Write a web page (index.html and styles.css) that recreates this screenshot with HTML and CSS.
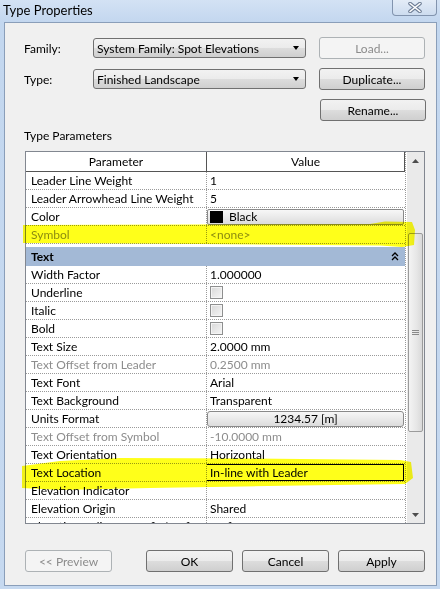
FILE: index.html
```html
<!DOCTYPE html>
<html>
<head>
<meta charset="utf-8">
<link rel="stylesheet" href="styles.css">
</head>
<body>
<div class="window">
  <div class="titlebar">
    <span class="title">Type Properties</span>
    <div class="close">
      <svg width="14" height="11" viewBox="0 0 14 11"><path d="M2 1.5 L12 9.5 M12 1.5 L2 9.5" stroke="#6e7e96" stroke-width="3.6" stroke-linecap="round"/><path d="M2 1.5 L12 9.5 M12 1.5 L2 9.5" stroke="#ffffff" stroke-width="1.6" stroke-linecap="round"/></svg>
    </div>
  </div>
  <div class="panel">
    <div class="form-row">
      <span class="label">Family:</span>
      <div class="combo"><span>System Family: Spot Elevations</span><span class="arrow"></span></div>
      <div class="btn disabled">Load...</div>
    </div>
    <div class="form-row">
      <span class="label">Type:</span>
      <div class="combo"><span>Finished Landscape</span><span class="arrow"></span></div>
      <div class="btn">Duplicate...</div>
    </div>
    <div class="form-row end">
      <div class="btn">Rename...</div>
    </div>
    <div class="section-label">Type Parameters</div>
    <div class="frame">
      <div class="grid">
        <div class="head">
          <div class="hcell">Parameter</div>
          <div class="hcell last">Value</div>
        </div>
        <div class="row"><div class="name">Leader Line Weight</div><div class="val">1</div></div>
        <div class="row"><div class="name">Leader Arrowhead Line Weight</div><div class="val">5</div></div>
        <div class="row"><div class="name">Color</div><div class="val"><div class="cellbtn left"><span class="swatch"></span>Black</div></div></div>
        <div class="row dim"><div class="name">Symbol</div><div class="val">&lt;none&gt;</div></div>
        <div class="group"><div class="group-band"><span>Text</span>
          <svg width="8" height="9" viewBox="0 0 8 9"><path d="M1 4 L4 1 L7 4 M1 8 L4 5 L7 8" stroke="#000" stroke-width="1.3" fill="none"/></svg></div></div>
        <div class="row"><div class="name">Width Factor</div><div class="val">1.000000</div></div>
        <div class="row"><div class="name">Underline</div><div class="val"><span class="check"></span></div></div>
        <div class="row"><div class="name">Italic</div><div class="val"><span class="check"></span></div></div>
        <div class="row"><div class="name">Bold</div><div class="val"><span class="check"></span></div></div>
        <div class="row"><div class="name">Text Size</div><div class="val">2.0000 mm</div></div>
        <div class="row dim"><div class="name">Text Offset from Leader</div><div class="val">0.2500 mm</div></div>
        <div class="row"><div class="name">Text Font</div><div class="val">Arial</div></div>
        <div class="row"><div class="name">Text Background</div><div class="val">Transparent</div></div>
        <div class="row"><div class="name">Units Format</div><div class="val"><div class="cellbtn center">1234.57 [m]</div></div></div>
        <div class="row dim"><div class="name">Text Offset from Symbol</div><div class="val">-10.0000 mm</div></div>
        <div class="row"><div class="name">Text Orientation</div><div class="val">Horizontal</div></div>
        <div class="row"><div class="name">Text Location</div><div class="val"><div class="editbox">In-line with Leader</div></div></div>
        <div class="row"><div class="name">Elevation Indicator</div><div class="val"></div></div>
        <div class="row"><div class="name">Elevation Origin</div><div class="val">Shared</div></div>
        <div class="row"><div class="name">Elevation Indicator Prefix/Suffix</div><div class="val">Suffix</div></div>
      </div>
      <div class="scroll">
        <div class="sbtn"><svg width="7" height="4" viewBox="0 0 7 4"><path d="M0 4 L3.5 0 L7 4 Z" fill="#4d4d4d"/></svg></div>
        <div class="track">
          <div class="thumb"><svg width="7" height="6" viewBox="0 0 7 6"><path d="M0 0.5 H7 M0 2.5 H7 M0 4.5 H7" stroke="#8a8a8a" stroke-width="1"/></svg></div>
        </div>
        <div class="sbtn"><svg width="7" height="4" viewBox="0 0 7 4"><path d="M0 0 L3.5 4 L7 0 Z" fill="#4d4d4d"/></svg></div>
      </div>
    </div>
    <div class="footer">
      <div class="btn disabled preview">&lt;&lt; Preview</div>
      <div class="btn">OK</div>
      <div class="btn">Cancel</div>
      <div class="btn">Apply</div>
    </div>
  </div>
  <svg class="marker" width="440" height="589" viewBox="0 0 440 589">
    <path d="M23 225 L200 224.5 L370 224 L385 221.5 L412 222 L415 230 L414 245 L402 247 L380 245.5 L200 244 L23 243 Z" fill="#ffff1a"/>
    <path d="M22 466 L60 461 L120 458 L250 458.5 L400 460 L411 462 L413 478 L405 484 L300 485.5 L150 488 L60 490 L22 488 Z" fill="#ffff1a"/>
  </svg>
</div>
</body>
</html>
```

FILE: styles.css
```css
* { box-sizing: border-box; }
html, body { margin: 0; padding: 0; }
body {
  width: 440px;
  height: 589px;
  overflow: hidden;
  font-family: Lato, "Noto Sans", sans-serif;
  font-size: 12px;
  color: #000;
}
.window {
  position: relative;
  width: 440px;
  height: 589px;
  display: flex;
  flex-direction: column;
  background: linear-gradient(#d3e2f4, #c3d7ef 22px, #c6d9f0 100%);
}
.titlebar {
  height: 22px;
  display: flex;
  align-items: flex-start;
  padding-left: 3px;
}
.title {
  font-size: 13px;
  line-height: 22px;
  align-self: center;
  margin-top: -3px;
}
.close {
  margin-left: auto;
  margin-right: 3px;
  width: 45px;
  height: 16px;
  border: 1px solid #8294ae;
  border-top: none;
  border-radius: 0 0 4px 4px;
  background: linear-gradient(#e3ecf7, #cddcef);
  display: flex;
  align-items: center;
  justify-content: center;
}
.panel {
  flex: 1;
  margin: 0 3px 3px 4px;
  border: 1px solid #8a9eb9;
  background: #f0f0f0;
  padding: 14px 11px 0 19px;
  display: flex;
  flex-direction: column;
}
.form-row {
  display: flex;
  align-items: center;
  height: 22px;
  margin-bottom: 9px;
}
.form-row.end { justify-content: flex-end; margin-bottom: 0; margin-right: -1px; }
.label { width: 69px; }
.combo {
  width: 213px;
  height: 20px;
  border: 1px solid #707070;
  border-radius: 3px;
  background: linear-gradient(#f2f2f2 0%, #ebebeb 50%, #dddddd 50%, #cfcfcf 100%);
  display: flex;
  align-items: center;
  padding-left: 3px;
  padding-right: 6px;
  margin-right: 13px;
}
.combo .arrow {
  margin-left: auto;
  width: 0;
  height: 0;
  border-left: 3.5px solid transparent;
  border-right: 3.5px solid transparent;
  border-top: 4px solid #000;
}
.btn {
  width: 106px;
  height: 22px;
  border: 1px solid #707070;
  border-radius: 3px;
  background: linear-gradient(#f2f2f2 0%, #ebebeb 50%, #dddddd 50%, #cfcfcf 100%);
  display: flex;
  align-items: center;
  justify-content: center;
}
.btn.disabled {
  border-color: #adb2b5;
  background: #f4f4f4;
  color: #8c8c8c;
}
.section-label {
  margin-top: 7px;
  height: 16px;
  line-height: 16px;
  margin-bottom: 7px;
}
.frame {
  position: relative;
  margin-left: 1px;
  width: 400px;
  height: 373px;
  border: 1px solid #828790;
  display: flex;
  background: #fff;
}
.grid {
  width: 380px;
  height: 100%;
  overflow: hidden;
  border-right: 1px dotted #9a9a9a;
}
.head {
  display: grid;
  grid-template-columns: 181px 1fr;
  height: 20px;
  border-bottom: 1px solid #555;
}
.hcell {
  display: flex;
  align-items: center;
  justify-content: center;
  border-right: 1px solid #555;
}
.row {
  display: grid;
  grid-template-columns: 181px 1fr;
  height: 18px;
  border-bottom: 1px dotted #9a9a9a;
}
.name, .val {
  line-height: 17px;
  white-space: nowrap;
  overflow: hidden;
}
.name {
  padding-left: 5px;
  border-right: 1px dotted #9a9a9a;
}
.val {
  padding-left: 3px;
  display: flex;
  align-items: center;
}
.row.dim { color: #8d8d8d; }
.group {
  height: 22px;
  padding-top: 3px;
}
.group-band {
  height: 19px;
  background: #a3b9d6;
  font-weight: bold;
  padding-left: 5px;
  padding-right: 6px;
  display: flex;
  align-items: center;
  justify-content: space-between;
}
.cellbtn {
  margin-left: -3px;
  width: 197px;
  height: 16px;
  border: 1px solid #8a8a8a;
  border-radius: 2px;
  background: linear-gradient(#f7f7f7, #eaeaea 50%, #dcdcdc);
  display: flex;
  align-items: center;
}
.cellbtn.left { padding-left: 2px; }
.cellbtn.center { justify-content: center; border-radius: 3px; }
.swatch {
  width: 13px;
  height: 12px;
  background: #000;
  margin-right: 6px;
}
.check {
  width: 13px;
  height: 13px;
  border: 1px solid #8e8f8f;
  background: linear-gradient(135deg, #d8d8d8, #f6f6f6);
  box-shadow: inset 0 0 0 1px #f4f4f4;
}
.editbox {
  margin-left: -4px;
  width: 198px;
  height: 17px;
  border: 1px solid #000;
  padding-left: 3px;
  line-height: 15px;
}
.scroll {
  width: 17px;
  margin-left: 1px;
  background: #eaeaea;
  display: flex;
  flex-direction: column;
}
.sbtn {
  height: 17px;
  display: flex;
  align-items: center;
  justify-content: center;
}
.track {
  flex: 1;
  padding-top: 64px;
  padding-left: 1px;
}
.thumb {
  width: 15px;
  height: 199px;
  border: 1px solid #9b9b9b;
  border-radius: 2px;
  background: linear-gradient(90deg, #f4f4f4, #e6e6e6 60%, #d9d9d9);
  display: flex;
  align-items: center;
  justify-content: center;
}
.footer {
  margin-top: 26px;
  display: flex;
  gap: 9px;
}
.footer .btn { width: 87px; }
.footer .preview { margin-left: 1px; margin-right: auto; }
.marker {
  position: absolute;
  left: 0;
  top: 0;
  pointer-events: none;
  mix-blend-mode: multiply;
  filter: blur(0.5px);
}
```
